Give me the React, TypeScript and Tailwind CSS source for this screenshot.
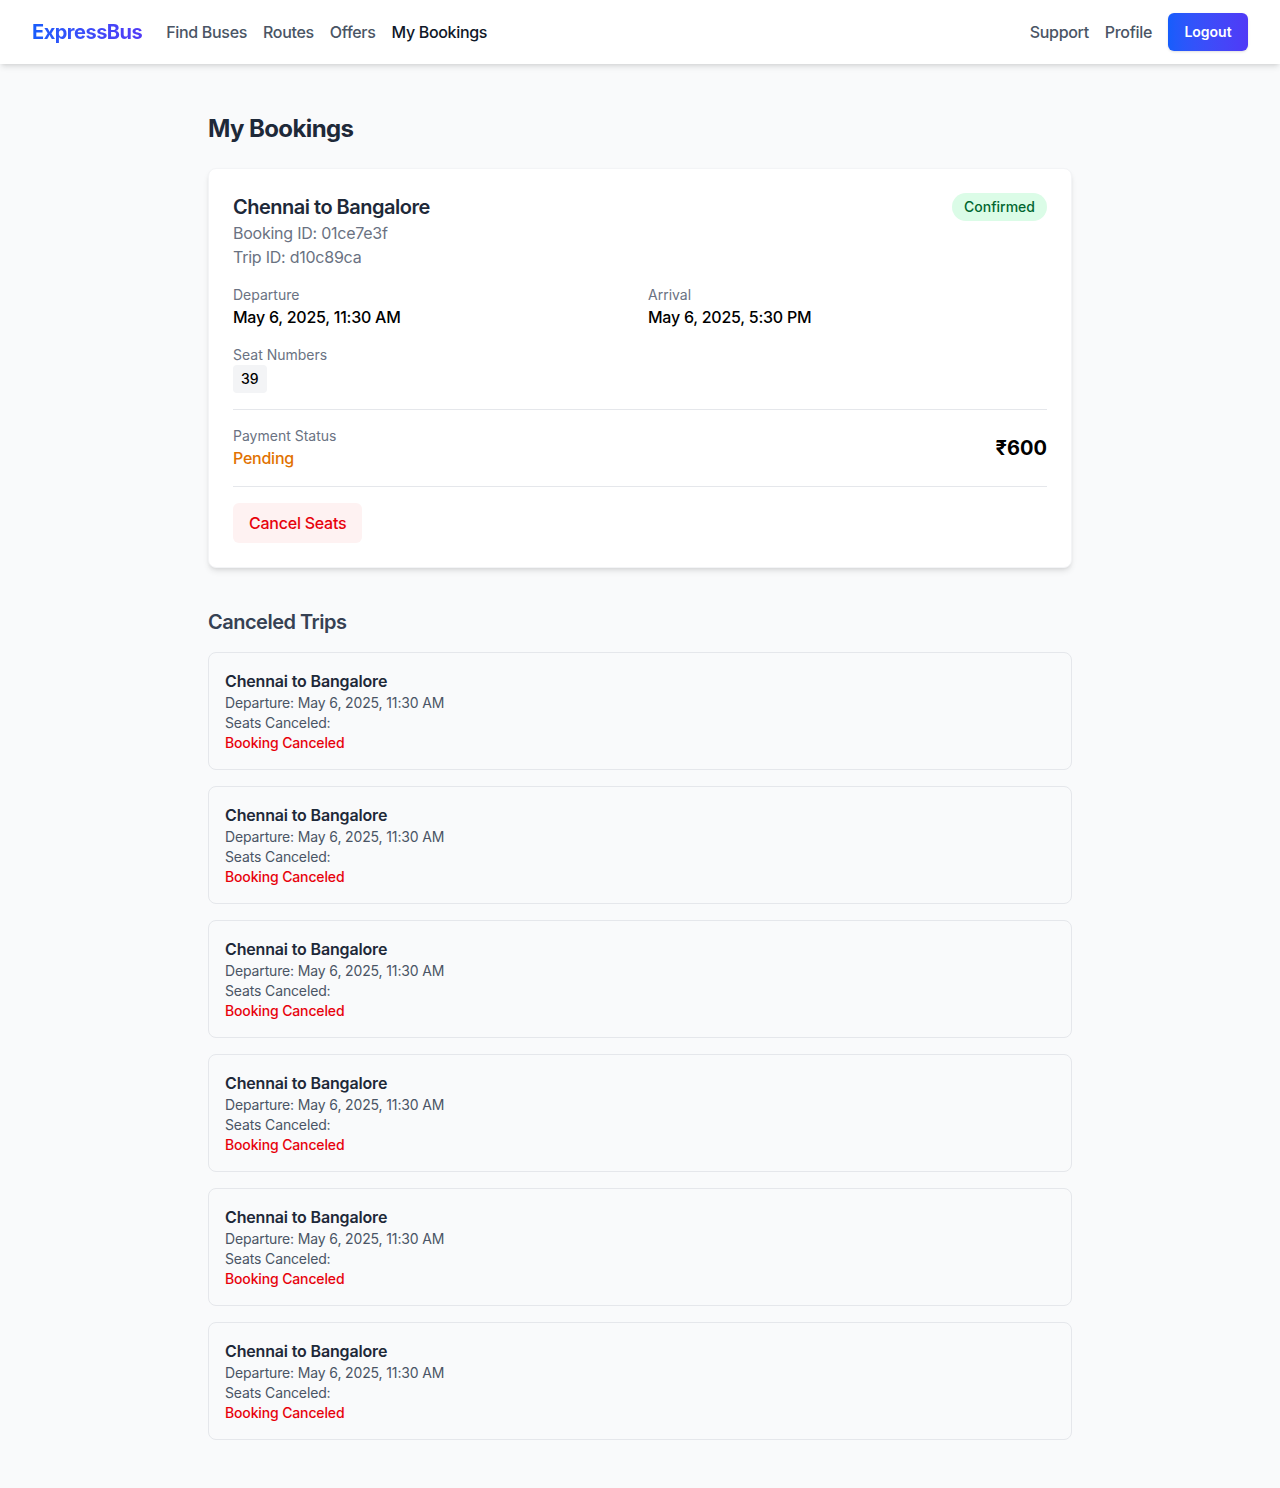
import React from "react";

const canceled = Array.from({ length: 6 });

export default function App() {
  return (
    <div className="min-h-screen bg-gray-50" style={{ fontFamily: "Inter, 'Noto Sans', sans-serif" }}>
      <header className="h-16 bg-white shadow-md flex items-center justify-between px-8">
        <div className="flex items-center gap-6">
          <span className="text-xl font-bold tracking-tight bg-gradient-to-r from-blue-600 to-indigo-600 bg-clip-text text-transparent">
            ExpressBus
          </span>
          <nav className="flex items-center gap-4 text-base font-medium tracking-[-0.02em]">
            <a className="text-gray-600">Find Buses</a>
            <a className="text-gray-600">Routes</a>
            <a className="text-gray-600">Offers</a>
            <a className="text-gray-900">My Bookings</a>
          </nav>
        </div>
        <div className="flex items-center gap-4 text-base font-medium tracking-[-0.02em]">
          <a className="text-gray-600">Support</a>
          <a className="text-gray-600">Profile</a>
          <button className="h-[38px] w-20 rounded-md bg-gradient-to-r from-blue-600 to-indigo-600 text-white text-sm font-semibold shadow-sm tracking-normal">
            Logout
          </button>
        </div>
      </header>

      <main className="max-w-4xl mx-auto px-4 pt-12 pb-12">
        <h1 className="text-2xl leading-[34px] font-bold tracking-tight text-gray-800 mb-[22px]">My Bookings</h1>

        <div className="bg-white rounded-lg shadow-md border border-gray-100 p-6">
          <div className="flex items-start justify-between">
            <div>
              <h2 className="text-xl font-semibold tracking-tight text-gray-800">Chennai to Bangalore</h2>
              <p className="text-base text-gray-500 tracking-[-0.015em]">Booking ID: 01ce7e3f</p>
              <p className="text-base text-gray-500 tracking-[-0.015em]">Trip ID: d10c89ca</p>
            </div>
            <span className="px-3 py-1 rounded-full bg-green-100 text-green-800 text-sm font-medium">
              Confirmed
            </span>
          </div>

          <div className="grid grid-cols-2 gap-4 mt-4">
            <div>
              <p className="text-sm text-gray-500">Departure</p>
              <p className="text-base font-medium text-black tracking-[-0.015em]">May 6, 2025, 11:30 AM</p>
            </div>
            <div>
              <p className="text-sm text-gray-500">Arrival</p>
              <p className="text-base font-medium text-black tracking-[-0.015em]">May 6, 2025, 5:30 PM</p>
            </div>
          </div>

          <div className="mt-4">
            <p className="text-sm text-gray-500">Seat Numbers</p>
            <div className="flex gap-2">
              <span className="px-2 py-1 rounded bg-gray-100 text-sm font-medium text-black">39</span>
            </div>
          </div>

          <div className="mt-4 pt-4 border-t border-gray-200 flex items-center justify-between">
            <div>
              <p className="text-sm text-gray-500">Payment Status</p>
              <p className="text-base font-medium text-amber-600 tracking-[-0.015em]">Pending</p>
            </div>
            <p className="text-xl font-bold text-black">₹600</p>
          </div>

          <div className="mt-4 pt-4 border-t border-gray-200">
            <button className="px-4 py-2 rounded-md bg-red-50 text-red-600 text-base font-medium tracking-[-0.015em]">
              Cancel Seats
            </button>
          </div>
        </div>

        <h2 className="text-xl font-semibold tracking-tight text-gray-700 mt-10 mb-4">Canceled Trips</h2>
        <div className="flex flex-col gap-4">
          {canceled.map((_, i) => (
            <div key={i} className="border border-gray-200 rounded-lg p-4 bg-gray-50">
              <p className="text-base font-semibold text-gray-800 tracking-[-0.01em]">Chennai to Bangalore</p>
              <p className="text-sm text-gray-600 tracking-[-0.01em]">Departure: May 6, 2025, 11:30 AM</p>
              <p className="text-sm text-gray-600 tracking-[-0.01em]">Seats Canceled: </p>
              <p className="text-sm font-medium text-red-600 tracking-[-0.01em]">Booking Canceled</p>
            </div>
          ))}
        </div>
      </main>
    </div>
  );
}
